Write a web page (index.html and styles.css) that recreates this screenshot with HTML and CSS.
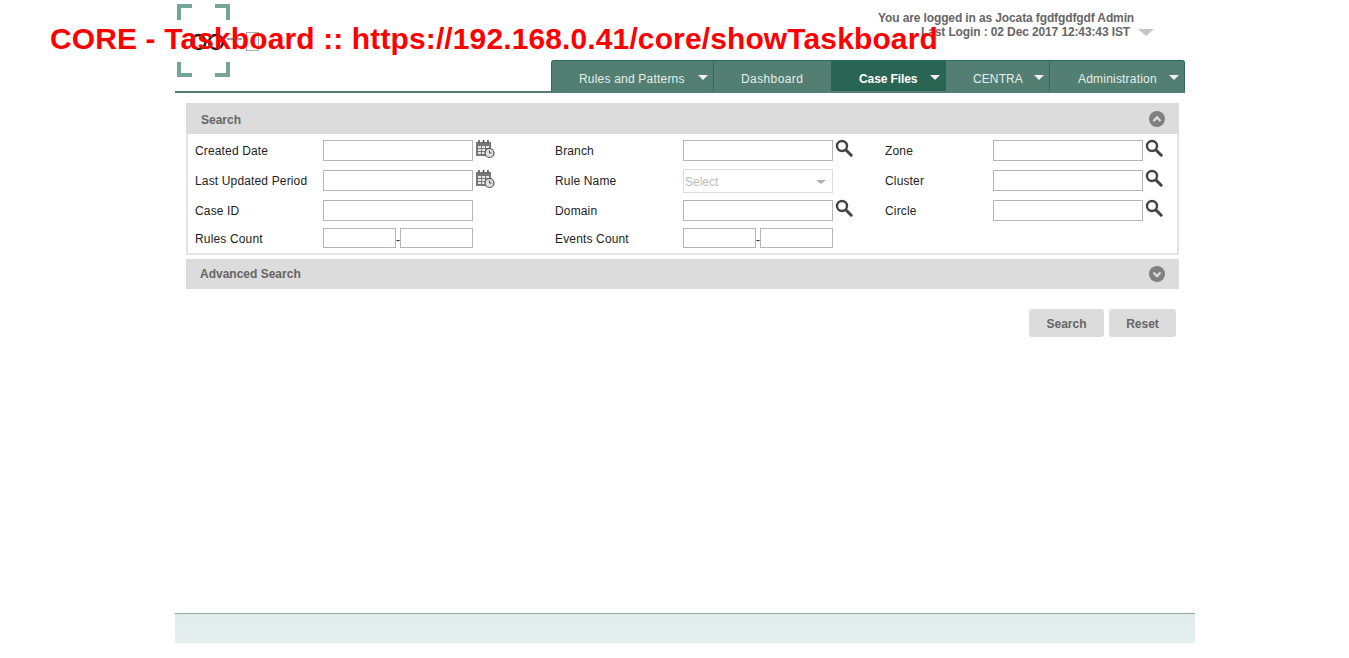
FILE: index.html
```html
<!DOCTYPE html>
<html lang="en">
<head>
    <meta charset="UTF-8">
    <meta name="viewport" content="width=device-width, initial-scale=1.0">
    <title>CORE - Taskboard</title>
    <link rel="stylesheet" href="styles.css">
</head>
<body>
    <svg class="defs" width="0" height="0">
        <symbol id="ico-search" viewBox="0 0 18 18">
            <circle cx="7" cy="7" r="5" fill="none" stroke="#444" stroke-width="2.4"/>
            <path d="M11 11l5.2 5.2" stroke="#444" stroke-width="3" stroke-linecap="round"/>
        </symbol>
        <symbol id="ico-cal" viewBox="0 0 20 20">
            <path d="M1 3h15v14H1z" fill="#777"/>
            <path d="M4 1v3M8.500 1v3M13 1v3" stroke="#555" stroke-width="1.6"/>
            <path d="M3 7h3v2H3zM7 7h3v2H7zM11 7h3v2h-3zM3 10h3v2H3zM7 10h3v2H7zM3 13h3v2H3zM7 13h3v2H7z" fill="#e8e8e8"/>
            <circle cx="14.500" cy="14" r="4.500" fill="#ddd" stroke="#555" stroke-width="1.200"/>
            <path d="M14.500 11.500V14h2" fill="none" stroke="#555"/>
        </symbol>
    </svg>

    <h1 class="page-title">CORE - Taskboard :: https://192.168.0.41/core/showTaskboard</h1>

    <div class="wrapper">
        <header class="top">
            <svg class="logo" width="84" height="73" viewBox="0 0 84 73">
                <path d="M15 2H2v14M38 2h13v14M2 58v13h13M51 58v13H38" fill="none" stroke="#76a598" stroke-width="4"/>
                <circle cx="21.500" cy="38" r="7" fill="none" stroke="#222" stroke-width="2.500"/>
                <circle cx="39" cy="38" r="7" fill="none" stroke="#222" stroke-width="2.500"/>
                <path d="M50 35h15" stroke="#444" stroke-width="1"/>
                <rect x="69.500" y="28.500" width="12" height="18" fill="none" stroke="#aaa"/>
            </svg>
            <div class="user-info">
                <p class="user-line">You are logged in as Jocata fgdfgdfgdf Admin</p>
                <p class="user-line user-login">Last Login : 02 Dec 2017 12:43:43 IST <span class="user-arrow"></span></p>
            </div>
        </header>

        <nav class="nav">
            <a class="nav-item nav-rules">Rules and Patterns<span class="caret"></span></a>
            <a class="nav-item nav-dash">Dashboard</a>
            <a class="nav-item nav-case active">Case Files<span class="caret"></span></a>
            <a class="nav-item nav-centra">CENTRA<span class="caret"></span></a>
            <a class="nav-item nav-admin">Administration<span class="caret"></span></a>
        </nav>

        <main class="content">
            <div class="panel-head">
                <span class="panel-title">Search</span>
                <span class="toggle"><svg width="16" height="16" viewBox="0 0 16 16"><circle cx="8" cy="8" r="8" fill="#808080"/><path d="M4.500 10L8 6.500 11.500 10" fill="none" stroke="#ddd" stroke-width="2.400"/></svg></span>
            </div>
            <div class="panel-body">
                <label>Created Date</label>
                <div class="field"><input type="text"><svg class="ico-cal" width="20" height="20"><use href="#ico-cal"/></svg></div>
                <label>Branch</label>
                <div class="field"><input type="text"><svg class="ico-search" width="18" height="18"><use href="#ico-search"/></svg></div>
                <label>Zone</label>
                <div class="field"><input type="text"><svg class="ico-search" width="18" height="18"><use href="#ico-search"/></svg></div>

                <label>Last Updated Period</label>
                <div class="field"><input type="text"><svg class="ico-cal" width="20" height="20"><use href="#ico-cal"/></svg></div>
                <label>Rule Name</label>
                <div class="field"><div class="select">Select<span class="select-arrow"></span></div></div>
                <label>Cluster</label>
                <div class="field"><input type="text"><svg class="ico-search" width="18" height="18"><use href="#ico-search"/></svg></div>

                <label>Case ID</label>
                <div class="field"><input type="text"></div>
                <label>Domain</label>
                <div class="field"><input type="text"><svg class="ico-search" width="18" height="18"><use href="#ico-search"/></svg></div>
                <label>Circle</label>
                <div class="field"><input type="text"><svg class="ico-search" width="18" height="18"><use href="#ico-search"/></svg></div>

                <label>Rules Count</label>
                <div class="field range"><input type="text"><span>-</span><input type="text"></div>
                <label>Events Count</label>
                <div class="field range"><input type="text"><span>-</span><input type="text"></div>
            </div>
            <div class="panel-head panel-adv">
                <span>Advanced Search</span>
                <span class="toggle"><svg width="16" height="16" viewBox="0 0 16 16"><circle cx="8" cy="8" r="8" fill="#808080"/><path d="M4.500 6.500L8 10l3.500-3.500" fill="none" stroke="#ddd" stroke-width="2.400"/></svg></span>
            </div>
            <div class="actions">
                <button type="button" class="btn btn-search">Search</button>
                <button type="button" class="btn btn-reset">Reset</button>
            </div>
        </main>

        <footer class="footer"></footer>
    </div>
</body>
</html>
```

FILE: styles.css
```css
* {
    box-sizing: border-box;
}

html, body {
    margin: 0;
    padding: 0;
}

body {
    background-color: #fff;
    font-family: "Liberation Sans", Arial, sans-serif;
    font-size: 12px;
    color: #222;
}

.defs {
    position: absolute;
}

.page-title {
    position: absolute;
    top: 21px;
    left: 50px;
    margin: 0;
    font-size: 30px;
    line-height: 36px;
    font-weight: bold;
    letter-spacing: 0.12px;
    color: #f00;
    white-space: nowrap;
}

.wrapper {
    width: 1020px;
    margin-left: 175px;
}

.top {
    display: flex;
    justify-content: space-between;
    height: 60px;
    padding-left: 2px;
}

.logo {
    margin-top: 4px;
    overflow: visible;
}

.user-info {
    width: 276px;
    margin-right: 41px;
    padding-top: 11px;
}

.user-line {
    margin: 0;
    height: 14px;
    line-height: 14px;
    font-weight: bold;
    color: #666;
    letter-spacing: -0.12px;
    white-space: nowrap;
}

.user-login {
    padding-left: 43px;
}

.user-arrow {
    display: inline-block;
    width: 0;
    height: 0;
    margin-left: 5px;
    border-style: solid;
    border-width: 7px 8px 0;
    border-color: #c4c4c4 transparent transparent;
}

.nav {
    display: flex;
    width: 1010px;
    height: 33px;
    padding-left: 376px;
    border-bottom: 2px solid #527f71;
}

.nav-item {
    position: relative;
    height: 31px;
    padding-top: 11px;
    border-top: 1px solid #2f6b5a;
    border-right: 1px solid #2f6b5a;
    background-color: #527f71;
    color: #e6eeeb;
    line-height: 14px;
    letter-spacing: 0.2px;
    white-space: nowrap;
}

.nav-rules {
    width: 163px;
    padding-left: 27px;
    border-left: 1px solid #2f6b5a;
    border-top-left-radius: 3px;
}

.nav-dash {
    width: 117px;
    padding-left: 27px;
    border-right-color: #527f71;
    letter-spacing: 0.4px;
}

.nav-case {
    width: 115px;
    padding-left: 28px;
}

.nav-centra {
    width: 104px;
    padding-left: 27px;
    letter-spacing: 0.1px;
}

.nav-admin {
    width: 135px;
    padding-left: 28px;
    border-top-right-radius: 3px;
}

.nav-item.active {
    background-color: #2a6553;
    border-right-color: #2a6553;
    font-weight: bold;
    letter-spacing: -0.1px;
    color: #fff;
}

.caret {
    position: absolute;
    top: 14px;
    right: 5px;
    width: 0;
    height: 0;
    border-style: solid;
    border-width: 5px 5px 0;
    border-color: #f0f0f0 transparent transparent;
}

.content {
    width: 993px;
    height: 520px;
    margin-left: 11px;
    padding-top: 10px;
}

.panel-head {
    display: flex;
    align-items: center;
    justify-content: space-between;
    height: 31px;
    padding: 0 14px;
    background-color: #dcdcdc;
    font-weight: bold;
    color: #666;
}

.panel-title {
    margin: 2px 0 0 1px;
}

.panel-adv {
    height: 30px;
    margin-top: 4px;
}

.toggle {
    display: flex;
}

.panel-body {
    display: grid;
    grid-template-columns: 128px 232px 128px 202px 108px 1fr;
    grid-template-rows: 30px 30px 28px 27px;
    height: 121px;
    padding: 6px 0 0 7px;
    border: 2px solid #e4e4e4;
    border-top: 0;
}

.panel-body label {
    padding-top: 4px;
    line-height: 14px;
    color: #222;
    letter-spacing: 0.15px;
}

.field {
    display: flex;
    align-items: flex-start;
}

.field input {
    width: 150px;
    height: 21px;
    margin: 0;
    padding: 0 2px;
    border: 1px solid #b5b5b5;
    background-color: #fff;
}

.ico-search {
    margin-left: 2px;
    margin-top: -1px;
}

.ico-cal {
    margin-left: 2px;
    margin-top: -1px;
}

.select {
    position: relative;
    width: 150px;
    height: 24px;
    margin-top: -1px;
    padding: 5px 0 0 1px;
    border: 1px solid #dcdcdc;
    line-height: 14px;
    color: #bbb;
}

.select-arrow {
    position: absolute;
    top: 10px;
    right: 6px;
    width: 0;
    height: 0;
    border-style: solid;
    border-width: 4px 5px 0;
    border-color: #b0b0b0 transparent transparent;
}

.range input {
    width: 73px;
    height: 20px;
}

.range span {
    width: 4px;
    line-height: 24px;
}

.actions {
    display: flex;
    justify-content: flex-end;
    gap: 5px;
    margin-top: 20px;
    padding-right: 3px;
}

.btn {
    height: 28px;
    padding: 2px 0 0;
    border: none;
    border-radius: 3px;
    background-color: #dcdcdc;
    font-family: inherit;
    font-size: 12px;
    font-weight: bold;
    color: #666;
}

.btn-search {
    width: 75px;
}

.btn-reset {
    width: 67px;
}

.footer {
    height: 30px;
    border-top: 1px solid #8fa9a6;
    background: linear-gradient(#e0ecec, #e5efef);
}
```
